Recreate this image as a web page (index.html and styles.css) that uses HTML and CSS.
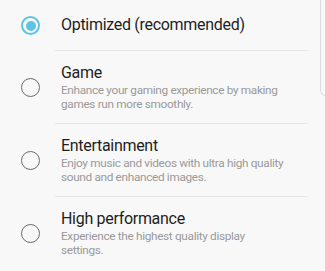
FILE: index.html
```html
<!DOCTYPE html>
<html>
<head>
<meta charset="utf-8">
<link rel="stylesheet" href="styles.css">
</head>
<body>
<div class="edge"></div>
<ul class="list">
  <li class="row">
    <span class="radio on"></span>
    <div class="body single">
      <div class="title">Optimized (recommended)</div>
    </div>
  </li>
  <li class="row">
    <span class="radio"></span>
    <div class="body">
      <div class="title">Game</div>
      <div class="desc">Enhance your gaming experience by making<br>games run more smoothly.</div>
    </div>
  </li>
  <li class="row">
    <span class="radio"></span>
    <div class="body">
      <div class="title">Entertainment</div>
      <div class="desc">Enjoy music and videos with ultra high quality<br>sound and enhanced images.</div>
    </div>
  </li>
  <li class="row last">
    <span class="radio"></span>
    <div class="body">
      <div class="title">High performance</div>
      <div class="desc">Experience the highest quality display<br>settings.</div>
    </div>
  </li>
</ul>
</body>
</html>
```
FILE: styles.css
```css
html, body {
  margin: 0;
  padding: 0;
  background: #f8f8f8;
  font-family: Roboto, "Noto Sans", sans-serif;
  overflow: hidden;
}
body {
  position: relative;
  width: 325px;
  height: 271px;
}
.edge {
  position: absolute;
  left: 320px;
  top: -10px;
  width: 20px;
  height: 105px;
  border-left: 1.5px solid #dcdcdc;
  border-bottom: 1.5px solid #dcdcdc;
  border-bottom-left-radius: 6px;
}
.list {
  list-style: none;
  margin: 0;
  padding: 0;
}
.row {
  display: flex;
  align-items: center;
}
.radio {
  flex: none;
  box-sizing: border-box;
  width: 19px;
  height: 19px;
  margin: 0 15px 0 21px;
  border: 1.5px solid #6b6b6b;
  border-radius: 50%;
  position: relative;
}
.radio.on {
  border: 2px solid #5fc3e3;
}
.radio.on::after {
  content: "";
  position: absolute;
  left: 2.5px;
  top: 2.5px;
  width: 10px;
  height: 10px;
  border-radius: 50%;
  background: #5fc3e3;
}
.body {
  flex: 1;
  margin-right: 17px;
  padding: 12px 0 12px 6px;
  border-bottom: 1px solid #e6e6e6;
  white-space: nowrap;
}
.body.single {
  padding: 15px 0 15px 6px;
}
.last .body {
  border-bottom: none;
}
.title {
  font-size: 16px;
  letter-spacing: -0.3px;
  line-height: 20px;
  color: #1e1e1e;
}
.desc {
  font-size: 11.8px;
  letter-spacing: -0.33px;
  line-height: 14px;
  color: #9a9a9a;
}
```
